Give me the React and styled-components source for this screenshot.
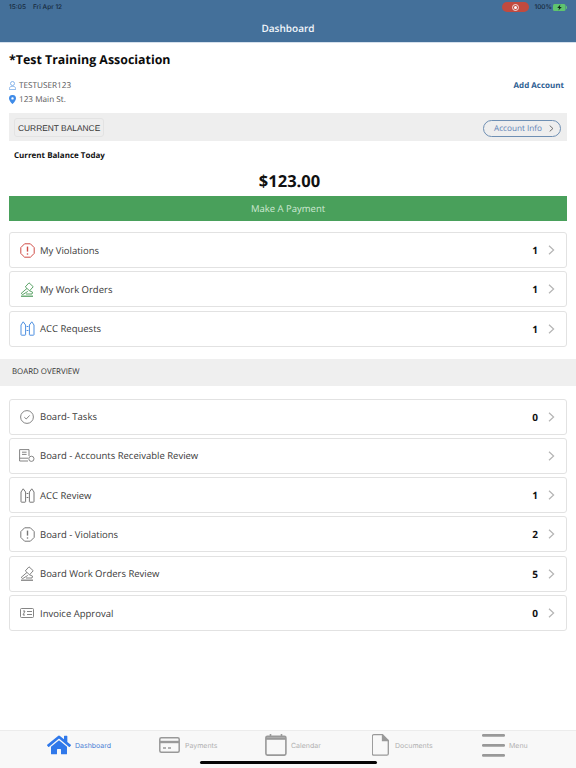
import React from 'react';
import styled, { createGlobalStyle } from 'styled-components';
import { FaHome } from 'react-icons/fa';

const GlobalStyle = createGlobalStyle`
  html, body { margin: 0; padding: 0; background: #fff; }
  body {
    font-family: "Open Sans", "Liberation Sans", sans-serif;
    color: #333;
    text-rendering: geometricPrecision;
  }
  #root { width: 576px; height: 768px; overflow: hidden; }
`;

const Page = styled.div`
  position: relative;
  display: flex;
  flex-direction: column;
  width: 576px;
  height: 768px;
`;

const Header = styled.header`
  flex: none;
  height: 42px;
  padding: 0 9px;
  background: #44709a;
  border-bottom: 1px solid #d5e0ec;
`;

const StatusBar = styled.div`
  display: flex;
  align-items: center;
  justify-content: space-between;
  height: 14px;
  font-size: 6.5px;
  font-family: "Inter", sans-serif;
  font-weight: 500;
  color: #16283a;
`;

const StatusGroup = styled.div`
  display: flex;
  align-items: center;
  gap: ${p => p.$gap}px;
`;

const RecordPill = styled.span`
  display: flex;
  align-items: center;
  justify-content: center;
  width: 27px;
  height: 10px;
  border-radius: 5px;
  background: #c14a3f;
`;

const Title = styled.div`
  margin-top: 6px;
  text-align: center;
  font-size: 10px;
  line-height: 16px;
  font-weight: 600;
  color: #f2f6fa;
`;

const Org = styled.h1`
  margin: 8px 0 0 9px;
  font-size: 12.4px;
  line-height: 17px;
  font-weight: 700;
  color: #0b0b0b;
`;

const AccountBlock = styled.div`
  display: flex;
  justify-content: space-between;
  margin: 11px 9px 0;
  padding-right: 3px;
`;

const AccountLines = styled.div`
  display: flex;
  flex-direction: column;
  gap: 1px;
`;

const AccountLine = styled.div`
  display: flex;
  align-items: center;
  gap: 3px;
  height: 13px;
  font-size: 8.2px;
  color: #555;
`;

const AddLink = styled.a`
  height: 13px;
  line-height: 13px;
  font-size: 8px;
  font-weight: 700;
  color: #2d6092;
`;

const BalanceBar = styled.div`
  display: flex;
  align-items: center;
  justify-content: space-between;
  height: 28px;
  margin: 7px 9px 0;
  padding: 0 6px 0 5px;
  background: #eeeeee;
`;

const BalanceChip = styled.div`
  width: 90px;
  height: 19px;
  box-sizing: border-box;
  padding-left: 3px;
  line-height: 18px;
  border: 1px solid #e3e3e3;
  border-radius: 3px;
  font-family: "Liberation Sans", sans-serif;
  font-size: 8.4px;
  white-space: nowrap;
  color: #333;
`;

const InfoPill = styled.div`
  display: flex;
  align-items: center;
  justify-content: space-between;
  width: 78px;
  height: 17px;
  box-sizing: border-box;
  margin-top: 2px;
  padding: 0 6px 0 10px;
  border: 1px solid #6e8fb3;
  border-radius: 9px;
  font-size: 8.2px;
  color: #5f84b8;
`;

const BalanceLabel = styled.div`
  margin: 9px 0 0 14px;
  font-size: 8px;
  line-height: 12px;
  font-weight: 700;
  color: #111;
`;

const Amount = styled.div`
  margin-top: 8px;
  padding-left: 3px;
  text-align: center;
  font-size: 16.5px;
  line-height: 22px;
  font-weight: 700;
  color: #111;
`;

const PayButton = styled.div`
  height: 25px;
  margin: 4px 9px 0;
  line-height: 25px;
  text-align: center;
  background: #49a05b;
  color: #cfe9d4;
  font-size: 9.5px;
`;

const List = styled.div`
  display: flex;
  flex-direction: column;
  gap: 3.3px;
  margin: ${p => p.$top}px 9px 0;
`;

const Row = styled.div`
  display: flex;
  align-items: center;
  height: 36px;
  box-sizing: border-box;
  padding: 0 11px 0 9px;
  background: #fff;
  border: 1px solid #e2e2e2;
  border-radius: 3px;
`;

const RowIcon = styled.span`
  display: flex;
  align-items: center;
  justify-content: center;
  width: 16px;
  height: 18px;
  margin-right: 5px;
`;

const RowLabel = styled.span`
  flex: 1;
  font-size: 9.5px;
  color: #3a3a3a;
`;

const RowCount = styled.span`
  margin-right: 10px;
  font-size: 10px;
  font-weight: 700;
  color: #111;
`;

const SectionBand = styled.div`
  height: 27px;
  margin-top: 12px;
  padding-left: 12px;
  line-height: 27px;
  background: #efefef;
  font-size: 7.9px;
  color: #333;
`;

const TabBar = styled.nav`
  display: flex;
  align-items: flex-start;
  height: 38px;
  margin-top: auto;
  background: #f8f8f8;
  border-top: 1px solid #ececec;
  box-sizing: border-box;
  padding-left: 47px;
`;

const Tab = styled.div`
  display: flex;
  align-items: center;
  gap: ${p => p.$gap || 4}px;
  width: ${p => p.$width}px;
  height: 28px;
  font-family: "Inter", sans-serif;
  font-size: 7px;
  color: ${p => (p.$active ? '#4a7fd6' : '#b0b0b0')};
`;

const HomeBar = styled.div`
  position: absolute;
  left: 200px;
  bottom: 4px;
  width: 177px;
  height: 3px;
  border-radius: 2px;
  background: #050505;
`;

const Chevron = ({ color = '#b4b4b4', size = 10 }) => (
  <svg width={size * 0.7} height={size} viewBox="0 0 7 10" fill="none" stroke={color} strokeWidth="1.2">
    <path d="M1 .8 5.6 5 1 9.2" />
  </svg>
);

const AlertIcon = ({ color }) => (
  <svg width="15" height="15" viewBox="0 0 15 15" fill="none" stroke={color} strokeWidth="1">
    <path d="M4.6.8h5.8l3.8 3.8v5.8l-3.8 3.8H4.6L.8 10.4V4.6z" strokeLinejoin="round" />
    <path d="M7.5 3.6v5" strokeWidth="1.4" />
    <circle cx="7.5" cy="11" r=".8" fill={color} stroke="none" />
  </svg>
);

const GavelIcon = ({ color }) => (
  <svg width="16" height="15" viewBox="0 0 16 15" fill="none" stroke={color} strokeWidth=".9">
    <path d="M10 .8l4.2 3.9-3.6 4.1-4.3-3.9z" strokeLinejoin="round" />
    <path d="M8 6.4 2.2 11.4l1.5 1.2 5.1-3.2" strokeLinejoin="round" />
    <path d="M10.6 8.8l3 1.4-.6 1.8H7" />
    <path d="M2 14.2h12" strokeWidth="1.2" />
  </svg>
);

const DoorsIcon = ({ color }) => (
  <svg width="15" height="15" viewBox="0 0 15 15" fill="none" stroke={color} strokeWidth="1">
    <path d="M1 4 3.2.8 5.6 4v9.6a.6.6 0 0 1-.6.6H1.6a.6.6 0 0 1-.6-.6z" />
    <path d="M9.4 4 11.8.8 14 4v9.6a.6.6 0 0 1-.6.6H10a.6.6 0 0 1-.6-.6z" />
    <path d="M6.6 5.5h1.8M6.6 9.5h1.8" />
  </svg>
);

const CheckIcon = ({ color }) => (
  <svg width="14" height="14" viewBox="0 0 14 14" fill="none" stroke={color} strokeWidth=".9">
    <circle cx="7" cy="7" r="6.4" />
    <path d="M4.3 7.2 6.2 9l3.5-3.6" />
  </svg>
);

const LedgerIcon = ({ color }) => (
  <svg width="16" height="13" viewBox="0 0 16 13" fill="none" stroke={color} strokeWidth=".9">
    <path d="M.6.6h9.4v6.4M.6.6v11.4h8.4" />
    <path d="M.6 9.2h8.4" />
    <path d="M3 3.2h4.6M3 5.4h4.6" />
    <circle cx="12.4" cy="9.8" r="2.6" />
  </svg>
);

const BillIcon = ({ color }) => (
  <svg width="14" height="10" viewBox="0 0 14 10" fill="none" stroke={color} strokeWidth=".9">
    <rect x=".5" y=".5" width="13" height="9" rx="1" />
    <path d="M7 3.5h5M7 6.5h5M3 3h2L3 7h2" />
  </svg>
);

const rowsTop = [
  { label: 'My Violations', count: 1, Icon: AlertIcon, color: '#cf4b45' },
  { label: 'My Work Orders', count: 1, Icon: GavelIcon, color: '#4b9a58' },
  { label: 'ACC Requests', count: 1, Icon: DoorsIcon, color: '#4d8fe0' },
];

const rowsBoard = [
  { label: 'Board- Tasks', count: 0, Icon: CheckIcon },
  { label: 'Board - Accounts Receivable Review', Icon: LedgerIcon },
  { label: 'ACC Review', count: 1, Icon: DoorsIcon },
  { label: 'Board - Violations', count: 2, Icon: AlertIcon },
  { label: 'Board Work Orders Review', count: 5, Icon: GavelIcon },
  { label: 'Invoice Approval', count: 0, Icon: BillIcon },
];

const ListRow = ({ label, count, Icon, color = '#777' }) => (
  <Row>
    <RowIcon><Icon color={color} /></RowIcon>
    <RowLabel>{label}</RowLabel>
    {count !== undefined && <RowCount>{count}</RowCount>}
    <Chevron />
  </Row>
);

const App = () => (
  <Page>
    <GlobalStyle />
    <Header>
      <StatusBar>
        <StatusGroup $gap={7}><span>15:05</span><span>Fri Apr 12</span></StatusGroup>
        <StatusGroup $gap={5}>
          <RecordPill>
            <svg width="7" height="7" viewBox="0 0 7 7">
              <circle cx="3.5" cy="3.5" r="3" fill="none" stroke="#fff" strokeWidth=".8" />
              <circle cx="3.5" cy="3.5" r="1.5" fill="#fff" />
            </svg>
          </RecordPill>
          <span>100%</span>
          <svg width="14" height="7" viewBox="0 0 14 7" style={{ marginLeft: -4 }}>
            <rect x="0" y="0" width="12.5" height="7" rx="1.5" fill="#5fc46f" />
            <rect x="13" y="2.2" width="1" height="2.6" fill="#5fc46f" />
            <path d="M7.4.6 4.2 4h2l-.8 2.4L8.8 3h-2z" fill="#10281a" />
          </svg>
        </StatusGroup>
      </StatusBar>
      <Title>Dashboard</Title>
    </Header>

    <Org>*Test Training Association</Org>

    <AccountBlock>
      <AccountLines>
        <AccountLine>
          <svg width="7" height="9" viewBox="0 0 7 9" fill="none" stroke="#6fa5e6" strokeWidth=".8">
            <circle cx="3.5" cy="2.5" r="2" />
            <path d="M.4 8.6V7.4C.4 6 1.6 5.4 3.5 5.4s3.1.6 3.1 2v1.2z" />
          </svg>
          TESTUSER123
        </AccountLine>
        <AccountLine>
          <svg width="7" height="9" viewBox="0 0 7 9">
            <path fillRule="evenodd" d="M3.5 0A3.4 3.4 0 0 1 7 3.4C7 5.6 3.5 9 3.5 9S0 5.6 0 3.4A3.4 3.4 0 0 1 3.5 0zm0 2.2a1.2 1.2 0 1 0 0 2.4 1.2 1.2 0 0 0 0-2.4z" fill="#3f8be8" />
          </svg>
          123 Main St.
        </AccountLine>
      </AccountLines>
      <AddLink>Add Account</AddLink>
    </AccountBlock>

    <BalanceBar>
      <BalanceChip>CURRENT BALANCE</BalanceChip>
      <InfoPill>Account Info <Chevron color="#555" size={7} /></InfoPill>
    </BalanceBar>

    <BalanceLabel>Current Balance Today</BalanceLabel>
    <Amount>$123.00</Amount>
    <PayButton>Make A Payment</PayButton>

    <List $top={11}>
      {rowsTop.map(r => <ListRow key={r.label} {...r} />)}
    </List>

    <SectionBand>BOARD OVERVIEW</SectionBand>

    <List $top={13}>
      {rowsBoard.map(r => <ListRow key={r.label} {...r} />)}
    </List>

    <TabBar>
      <Tab $active $width={112}>
        <FaHome size={24} color="#2f78ea" />
        Dashboard
      </Tab>
      <Tab $width={106} $gap={5}>
        <svg width="21" height="16" viewBox="0 0 21 16" fill="none" stroke="#999" strokeWidth="1.5">
          <rect x=".8" y=".8" width="19.4" height="14.4" rx="1.5" />
          <path d="M.8 5h19.4" strokeWidth="2.4" />
          <path d="M4 11h3M9 11h3" />
        </svg>
        Payments
      </Tab>
      <Tab $width={107}>
        <svg width="22" height="22" viewBox="0 0 22 22" fill="none" stroke="#999" strokeWidth="1.6">
          <rect x=".9" y="2.2" width="20" height="18.9" rx="1.5" />
          <path d="M.9 4.5h20" strokeWidth="2.6" />
          <path d="M5.5 0v3M16.5 0v3" />
        </svg>
        Calendar
      </Tab>
      <Tab $width={110} $gap={6}>
        <svg width="17" height="22" viewBox="0 0 17 22" fill="none" stroke="#999" strokeWidth="1.3">
          <path d="M1.8.7h8.7l5.8 5.8v13.2a1.5 1.5 0 0 1-1.5 1.5h-13a1.5 1.5 0 0 1-1.5-1.5V2.2A1.5 1.5 0 0 1 1.8.7z" />
          <path d="M10.5.7v5.8h5.8" fill="#999" />
        </svg>
        Documents
      </Tab>
      <Tab $width={60}>
        <svg width="23" height="23" viewBox="0 0 23 23" fill="#999">
          <rect y="0" width="23" height="2.8" rx="1.2" />
          <rect y="10" width="23" height="2.8" rx="1.2" />
          <rect y="20" width="23" height="2.8" rx="1.2" />
        </svg>
        Menu
      </Tab>
    </TabBar>
    <HomeBar />
  </Page>
);

export default App;
